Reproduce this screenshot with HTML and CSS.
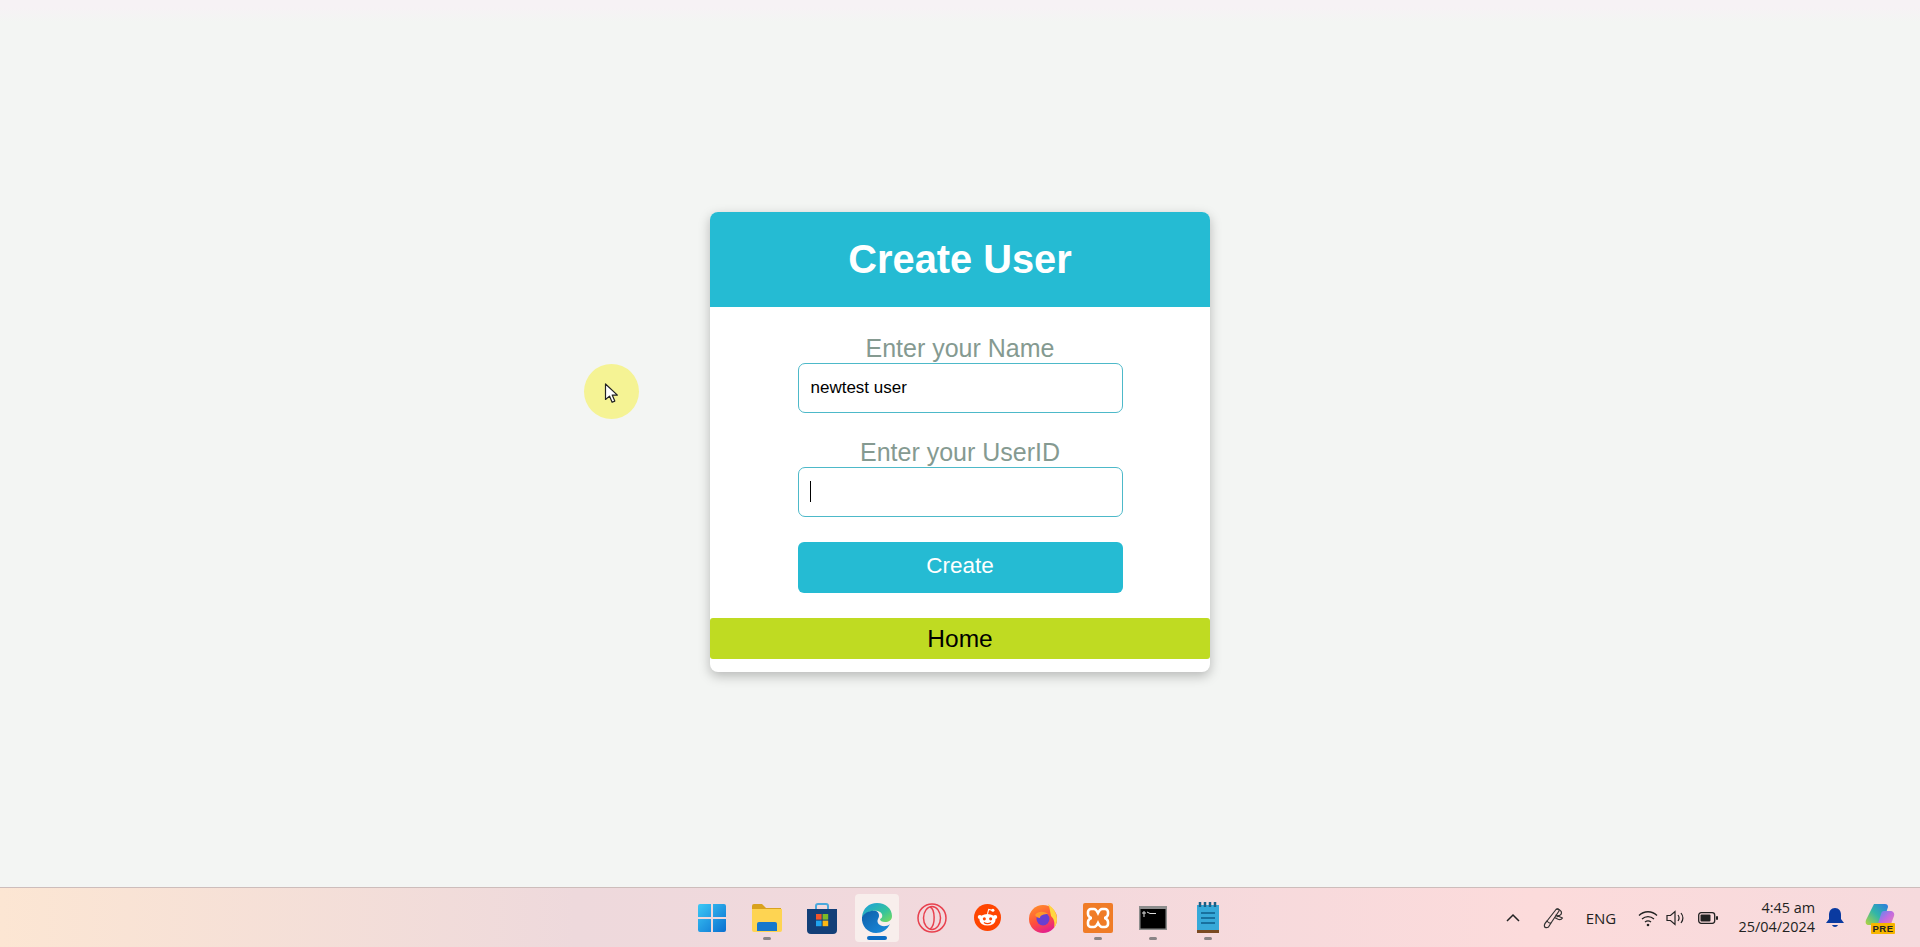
FILE: index.html
```html
<!DOCTYPE html>
<html lang="en">
<head>
  <meta charset="UTF-8">
  <title>Create User</title>
  <link rel="stylesheet" href="styles.css">
</head>
<body>

<main class="page">
  <div class="card">
    <h1 class="card-title">Create User</h1>
    <form class="form">
      <label class="label" for="name">Enter your Name</label>
      <input class="field" id="name" type="text" value="newtest user">
      <label class="label label-next" for="userid">Enter your UserID</label>
      <div class="field-wrap">
        <input class="field" id="userid" type="text">
        <span class="caret"></span>
      </div>
      <button class="create" type="button">Create</button>
    </form>
    <a class="home" href="#">Home</a>
  </div>
</main>

<!-- recording highlight round the mouse -->
<div class="pointer">
  <svg width="16" height="22" viewBox="0 0 16 22"><path d="M1.5 1v15.5l4-3.4 2.6 6.2 2.7-1.2-2.6-6h5.2z" fill="#fff" stroke="#222" stroke-width="1.2" stroke-linejoin="round"/></svg>
</div>

<footer class="taskbar">
  <div></div>
  <div class="apps">
    <div class="app">
      <svg width="30" height="30" viewBox="0 0 30 30">
        <defs><linearGradient id="win" x1="0" y1="0" x2="1" y2="1"><stop offset="0" stop-color="#3cc9f6"/><stop offset="1" stop-color="#0a6fd0"/></linearGradient></defs>
        <path d="M1 3a2 2 0 0 1 2-2h11v13H1zM16 1h11a2 2 0 0 1 2 2v11H16zM1 16h13v13H3a2 2 0 0 1-2-2zM16 16h13v11a2 2 0 0 1-2 2H16z" fill="url(#win)"/>
      </svg>
    </div>
    <div class="app running">
      <svg width="32" height="30" viewBox="0 0 32 30">
        <path d="M1 3a2 2 0 0 1 2-2h8l4 4h15v6H1z" fill="#d9a21e"/>
        <path d="M1 6h30v21a2 2 0 0 1-2 2H3a2 2 0 0 1-2-2z" fill="#fed452"/>
        <path d="M6 28v-7a2 2 0 0 1 2-2h16a2 2 0 0 1 2 2v7z" fill="#1678cc"/>
      </svg>
    </div>
    <div class="app">
      <svg width="30" height="32" viewBox="0 0 30 32">
        <path d="M9 7V4a2 2 0 0 1 2-2h8a2 2 0 0 1 2 2v3" fill="none" stroke="#4aa8dc" stroke-width="2"/>
        <path d="M0 7h30v21a4 4 0 0 1-4 4H4a4 4 0 0 1-4-4z" fill="#123f78"/>
        <rect x="9" y="12" width="5.6" height="5.6" fill="#f0552b"/>
        <rect x="15.6" y="12" width="5.6" height="5.6" fill="#7db928"/>
        <rect x="9" y="18.6" width="5.6" height="5.6" fill="#20a4ee"/>
        <rect x="15.6" y="18.6" width="5.6" height="5.6" fill="#fdb813"/>
      </svg>
    </div>
    <div class="app active">
      <svg width="32" height="32" viewBox="0 0 32 32">
        <defs>
          <linearGradient id="edgeTop" x1="0" y1="0" x2="1" y2="1"><stop offset="0" stop-color="#1b9de2"/><stop offset="0.6" stop-color="#34c39c"/><stop offset="1" stop-color="#7bdc5a"/></linearGradient>
          <linearGradient id="edgeLow" x1="0" y1="0" x2="1" y2="1"><stop offset="0" stop-color="#0f5ea8"/><stop offset="1" stop-color="#1a8ee0"/></linearGradient>
        </defs>
        <path d="M1 15C2 6 8 1 16 1c9 0 15 6 15 13 0 4-3 6-7 6-3 0-5-1-5-3 3-1 3-5 0-7-5-3-14 0-18 5z" fill="url(#edgeTop)"/>
        <path d="M1 15c3-5 9-7 14-6 3 1 4 5 2 8-2 4 2 8 8 7 1 0 3-1 4-2-3 6-8 9-14 9C7 31 0 24 1 15z" fill="url(#edgeLow)"/>
      </svg>
    </div>
    <div class="app">
      <svg width="30" height="30" viewBox="0 0 30 30" fill="none" stroke="#e8414e" stroke-width="1.500">
        <circle cx="15" cy="15" r="14"/>
        <ellipse cx="15" cy="15" rx="8.500" ry="11.500"/>
        <path d="M13 4c5 2 6 18 0 22"/>
      </svg>
    </div>
    <div class="app">
      <svg width="27" height="27" viewBox="0 0 30 30">
        <circle cx="15" cy="15" r="15" fill="#ff4500"/>
        <ellipse cx="15" cy="17.5" rx="9" ry="6.5" fill="#fff"/>
        <circle cx="6.5" cy="14.5" r="2.3" fill="#fff"/>
        <circle cx="23.5" cy="14.5" r="2.3" fill="#fff"/>
        <circle cx="11.5" cy="16.5" r="1.7" fill="#ff4500"/>
        <circle cx="18.5" cy="16.5" r="1.7" fill="#ff4500"/>
        <path d="M11 20.5c2.4 1.6 5.6 1.6 8 0" fill="none" stroke="#ff4500" stroke-width="1.2"/>
        <path d="M15 11l1.3-5 4 1" fill="none" stroke="#fff" stroke-width="1.2"/>
        <circle cx="21" cy="7" r="1.7" fill="#fff"/>
      </svg>
    </div>
    <div class="app">
      <svg width="28" height="30" viewBox="0 0 28 30">
        <defs><linearGradient id="fox" x1="0.100" y1="0.100" x2="0.500" y2="1"><stop offset="0" stop-color="#ff8a2c"/><stop offset="0.550" stop-color="#ff4f3c"/><stop offset="1" stop-color="#e5218a"/></linearGradient></defs>
        <circle cx="14" cy="16" r="14" fill="url(#fox)"/>
        <path d="M19 1c4 3 9 8 9 15 0 4-1 6-3 9 1-6 0-9-3-12-1-4-1-8-3-12z" fill="#ffd640"/>
        <circle cx="14" cy="16" r="6.500" fill="#6a3fd0"/>
        <path d="M6 12c3-4 9-4 13-1-4 0-8 1-8 4-2 0-4-1-5-3z" fill="#ff9a2c"/>
      </svg>
    </div>
    <div class="app running">
      <svg width="30" height="30" viewBox="0 0 30 30">
        <rect width="30" height="30" rx="2" fill="#f07c27"/>
        <path d="M8 6h3c2 0 3 2 4 4 1-2 2-4 4-4h3a3 3 0 0 1 3 3v2c0 2-2 4-4 4 2 0 4 2 4 4v2a3 3 0 0 1-3 3h-3c-2 0-3-2-4-4-1 2-2 4-4 4H8a3 3 0 0 1-3-3v-2c0-2 2-4 4-4-2 0-4-2-4-4V9a3 3 0 0 1 3-3z" fill="none" stroke="#fff" stroke-width="2.600"/>
      </svg>
    </div>
    <div class="app running">
      <svg width="28" height="24" viewBox="0 0 28 24">
        <rect width="28" height="24" fill="#8d8d8d"/>
        <rect x="1.500" y="3" width="25" height="19.500" fill="#000"/>
        <path d="M4 6h2v2H4zM8 6l3 1.500H17M4 10h2" stroke="#ddd" stroke-width="1" fill="none"/>
      </svg>
    </div>
    <div class="app running">
      <svg width="24" height="32" viewBox="0 0 24 32">
        <rect x="1" y="3" width="22" height="26" fill="#37a9d9"/>
        <rect x="1" y="28" width="22" height="3" fill="#7a4a22"/>
        <path d="M4 0v5M9 0v5M14 0v5M19 0v5" stroke="#1d5f86" stroke-width="2.500"/>
        <path d="M5 11h14M5 16h14M5 21h14" stroke="#0f5e8a" stroke-width="1.500"/>
      </svg>
    </div>
  </div>

  <div class="tray">
    <svg class="tray-chevron" width="16" height="10" viewBox="0 0 16 10"><path d="M2 8l6-6 6 6" fill="none" stroke="#222" stroke-width="1.500"/></svg>
    <svg class="tray-pen" width="24" height="24" viewBox="0 0 24 24" fill="none" stroke="#333" stroke-width="1.200" stroke-linejoin="round">
      <path d="M6 15L15 3.500c1.500-1.500 3.500-.5 3 1.500L10 17"/>
      <path d="M15 3.500c2-1 6 1 5.500 3.500 0 1-1 2-2 2.500l-3 1.500M14.500 9l7 3c-1 1.500-3 2-5 1l-3-1.500"/>
      <path d="M6 15c-2 2-3 4-2.500 5.500.5 1.500 2.500 1.500 4 .5L10 17c-1 .5-2.500 0-4-2z"/>
    </svg>
    <span class="tray-lang">ENG</span>
    <svg class="tray-wifi" width="20" height="18" viewBox="0 0 20 18" fill="none" stroke="#222" stroke-width="1.300">
      <path d="M1 6.500c5-5 13-5 18 0M4 10c3.500-3.200 8.500-3.200 12 0M7 13c1.800-1.400 4.200-1.400 6 0"/>
      <circle cx="10" cy="16" r="1.300" fill="#222" stroke="none"/>
    </svg>
    <svg class="tray-sound" width="20" height="18" viewBox="0 0 20 18" fill="none" stroke="#222" stroke-width="1.200">
      <path d="M1 6.500h3.500L9 2.500v13l-4.500-4H1zM12 6c1.300 1.800 1.300 4.200 0 6M15 4c2.300 3 2.300 7 0 10"/>
    </svg>
    <svg class="tray-battery" width="20" height="12" viewBox="0 0 20 12">
      <rect x="0.700" y="0.700" width="16" height="10.600" rx="2.500" fill="none" stroke="#222" stroke-width="1.300"/>
      <rect x="2.500" y="2.500" width="10" height="7" rx="1" fill="#222"/>
      <rect x="18" y="4" width="2" height="4" rx="1" fill="#222"/>
    </svg>
    <div class="clock">
      <span>4:45 am</span>
      <span>25/04/2024</span>
    </div>
    <svg class="tray-bell" width="20" height="22" viewBox="0 0 20 22">
      <path d="M10 1c4 0 6 3 6 7v4l3 4H1l3-4V8c0-4 2-7 6-7z" fill="#0a3aa0"/>
      <path d="M7 18c1 2.500 5 2.500 6 0z" fill="#0a3aa0"/>
    </svg>
    <div class="copilot">
      <svg width="30" height="26" viewBox="0 0 30 26">
        <defs>
          <linearGradient id="copA" x1="0" y1="1" x2="1" y2="0"><stop offset="0" stop-color="#b6d53a"/><stop offset="0.500" stop-color="#31b6a8"/><stop offset="1" stop-color="#2b7be0"/></linearGradient>
          <linearGradient id="copB" x1="0" y1="0" x2="1" y2="1"><stop offset="0" stop-color="#4c8ff0"/><stop offset="0.500" stop-color="#c46be0"/><stop offset="1" stop-color="#f08aa8"/></linearGradient>
        </defs>
        <path d="M9 1h11c2 0 3 1 3 3l-6 18H4C1 22 0 20 1 17z" fill="url(#copA)"/>
        <path d="M15 8h10c3 0 5 2 4 5l-3 8c-1 2-2 3-4 3H12l4-13c.500-2 1-3 3-3z" fill="url(#copB)"/>
      </svg>
      <span class="pre">PRE</span>
    </div>
  </div>
</footer>

</body>
</html>
```

FILE: styles.css
```css
* {
  box-sizing: border-box;
}
body {
  margin: 0;
  height: 947px;
  overflow: hidden;
  display: flex;
  flex-direction: column;
  font-family: "Liberation Sans", Arial, sans-serif;
  background: linear-gradient(#f6f2f5 8px, #f3f5f3 22px);
}
.page {
  flex: 1;
  display: flex;
  justify-content: center;
  align-items: flex-start;
  padding-top: 212px;
}
.card {
  width: 500px;
  height: 460px;
  background: #fff;
  border-radius: 8px;
  box-shadow: 0 4px 12px rgba(0, 0, 0, 0.25);
}
.card-title {
  margin: 0;
  height: 95px;
  line-height: 94px;
  background: #25bbd3;
  border-radius: 8px 8px 0 0;
  color: #fff;
  font-size: 39.800px;
  text-align: center;
}
.form {
  width: 325px;
  margin: 0 auto;
  padding-top: 26px;
  text-align: center;
}
.label {
  display: block;
  height: 30px;
  line-height: 30px;
  font-size: 25px;
  color: #859a91;
}
.label-next {
  margin-top: 24px;
}
.field-wrap {
  position: relative;
  height: 50px;
}
.field {
  display: block;
  width: 100%;
  height: 50px;
  padding: 0 12px 1px;
  border: 1px solid #4db9c9;
  border-radius: 7px;
  background: #fff;
  font-family: inherit;
  font-size: 17px;
  color: #000;
}
.caret {
  position: absolute;
  left: 12px;
  top: 14px;
  width: 1px;
  height: 21px;
  background: #000;
}
.create {
  display: block;
  width: 100%;
  height: 51px;
  margin-top: 25px;
  padding: 0 0 3px;
  border: 0;
  border-radius: 6px;
  background: #25bbd3;
  color: #fff;
  font-family: inherit;
  font-size: 22.500px;
}
.home {
  display: block;
  height: 41px;
  margin-top: 25px;
  line-height: 41px;
  background: #bfdb22;
  border-radius: 3px;
  color: #000;
  font-size: 24.500px;
  text-align: center;
  text-decoration: none;
}
.pointer {
  position: absolute;
  left: 584px;
  top: 364px;
  width: 55px;
  height: 55px;
  padding: 19px 0 0 20px;
  border-radius: 50%;
  background: #f5f394;
}
.taskbar {
  height: 60px;
  display: grid;
  grid-template-columns: 1fr auto 1fr;
  align-items: center;
  border-top: 1px solid #cdbdbb;
  background: linear-gradient(90deg, #fce6d3 0%, #eed9dc 30%, #f3d9dd 55%, #fcdbdb 80%, #f6dadd 100%);
}
.apps {
  display: flex;
  gap: 11.200px;
}
.app {
  position: relative;
  width: 44px;
  height: 48px;
  display: flex;
  justify-content: center;
  align-items: center;
  border-radius: 4px;
}
.running::after,
.active::after {
  content: "";
  position: absolute;
  bottom: 2px;
  left: 18px;
  width: 8px;
  height: 3px;
  border-radius: 2px;
  background: #8a8486;
}
.active {
  background: #f8eeec;
}
.active::after {
  left: 12px;
  width: 20px;
  height: 4px;
  background: #0b6cc4;
}
.tray {
  grid-column: 3;
  display: flex;
  align-items: center;
  justify-content: flex-end;
  padding-right: 25px;
}
.tray-pen { margin-left: 20px; }
.tray-lang {
  width: 32px;
  margin-left: 20px;
  font-family: "Open Sans", sans-serif;
  font-size: 15px;
  color: #222;
  text-align: center;
}
.tray-wifi { margin-left: 21px; }
.tray-sound { margin-left: 8px; }
.tray-battery { margin-left: 12px; }
.clock {
  width: 80px;
  margin-left: 17px;
  padding-bottom: 2px;
  display: flex;
  flex-direction: column;
  align-items: flex-end;
  font-family: "Open Sans", sans-serif;
  font-size: 14.400px;
  line-height: 19px;
  color: #222;
}
.tray-bell { margin-left: 10px; }
.copilot {
  position: relative;
  width: 30px;
  height: 30px;
  margin-left: 20px;
}
.pre {
  position: absolute;
  left: 6px;
  bottom: -1px;
  width: 24px;
  height: 11px;
  background: #f7b500;
  border-radius: 1px;
  font-size: 9.500px;
  font-weight: bold;
  line-height: 11px;
  letter-spacing: 0.5px;
  text-align: center;
  color: #222;
}
```
